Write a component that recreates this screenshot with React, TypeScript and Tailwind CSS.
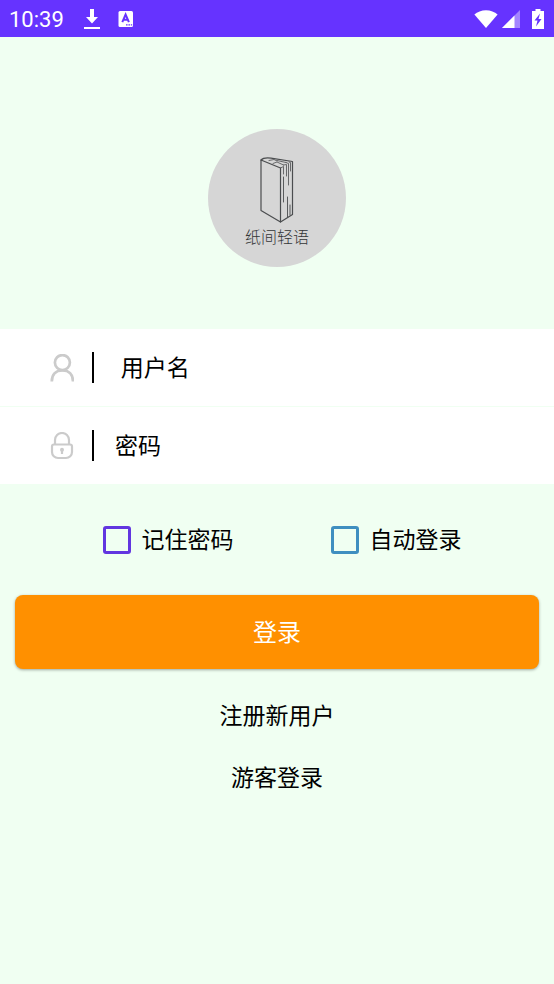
import React, { useState } from "react";

const FONT = "font-['Roboto','Noto_Sans_CJK_SC',sans-serif]";

function StatusBar() {
  return (
    <header className="flex h-[37px] items-center justify-between bg-[#6633ff] pl-[9px] pr-2.5 text-white">
      <div className="flex items-center">
        <span className="w-[75px] pt-0.5 text-[22px] leading-8">10:39</span>
        <svg className="h-5 w-4" viewBox="0 0 16 20" fill="currentColor" aria-hidden="true">
          <path d="M6 0h4v8h4l-6 6.500L2 8h4zM0 18h16v2H0z" />
        </svg>
        <svg className="ml-[18px] h-4 w-4" viewBox="0 0 16 16" aria-hidden="true">
          <rect x="0.500" width="14.500" height="16" rx="1.500" fill="#fff" />
          <path d="M4.300 11.200 7.600 3.600l3.300 7.600M5.600 8.700h4" fill="none" stroke="#6633ff" strokeWidth="2" />
          <path d="M8 13.200h1.600v1.200H8zM10.400 13.200H12v1.200h-1.600zM12.800 13.200h1.400v1.200h-1.400z" fill="#6633ff" />
        </svg>
      </div>
      <div className="flex items-center">
        <svg className="h-5 w-6" viewBox="0 0 24 20" fill="currentColor" aria-hidden="true">
          <path d="M.4 5.600C3.300 3 7.500 1.200 12 1.200S20.700 3 23.600 5.600L12 19z" />
        </svg>
        <svg className="ml-1 h-[18px] w-[18px]" viewBox="0 0 18 18" fill="currentColor" aria-hidden="true">
          <path d="M0 18 18 0v18z" opacity="0.4" />
          <path d="M0 18 12.500 5.500V18z" />
        </svg>
        <svg className="ml-3 h-5 w-3" viewBox="0 0 12 20" aria-hidden="true">
          <path d="M3.500 0h5v2H12v18H0V2h3.500z" fill="#fff" />
          <path d="M8 4.500 2.500 11.500h3L4 17.500l5.500-7.500h-3z" fill="#6633ff" />
        </svg>
      </div>
    </header>
  );
}

function Logo() {
  return (
    <div className="flex h-[138px] w-[138px] flex-col items-center rounded-full bg-[#d6d6d6] pt-7">
      <svg
        className="h-[66px] w-[34px]"
        viewBox="0 0 34 66"
        fill="none"
        stroke="#4b4d4f"
        strokeLinejoin="round"
        strokeLinecap="round"
        aria-hidden="true"
      >
        <path d="M1 3 20.500 11V65L1 53.500z" strokeWidth="1.200" />
        <path d="M1 3C3 1 7 .700 11 1.200L32.500 4.500V57.500L20.500 65" strokeWidth="1.200" />
        <path d="M20.500 11 23.500 9.500V17M23.500 8l3-.500V19M26 5.500l2.500 1V28M29 5l1.500.500V14" strokeWidth="0.800" />
        <path d="M9 3.500l5-1 3 1.500M13 6.500l4-1.500 6.500 3M17 3.500l9 2" strokeWidth="0.800" />
        <path d="M23.500 20v25M27.500 40v20M30 48v10" strokeWidth="0.900" />
      </svg>
      <p className="mt-[3px] text-[16px] leading-6 font-light text-[#333537]">纸间轻语</p>
    </div>
  );
}

function UserIcon() {
  return (
    <svg className="h-7 w-6" viewBox="0 0 24 28" fill="none" stroke="#cbcbcb" strokeWidth="2.700" aria-hidden="true">
      <circle cx="12.400" cy="8.600" r="7.500" />
      <path d="M1.800 27.500C1.800 20.500 6 16.300 12.400 16.300S23 20.500 23 27.500" />
    </svg>
  );
}

function LockIcon() {
  return (
    <svg className="h-7 w-6" viewBox="0 0 24 28" fill="none" stroke="#cbcbcb" strokeWidth="2.200" aria-hidden="true">
      <path d="M4 12.500h16q2 0 2 2V20a6 6 0 0 1-6 6H8a6 6 0 0 1-6-6v-5.500q0-2 2-2z" />
      <path d="M5 12.500V8a7 7 0 0 1 14 0v4.500" />
      <circle cx="12" cy="17.800" r="2" fill="#cbcbcb" stroke="none" />
      <path d="M12 18v4" />
    </svg>
  );
}

interface FieldProps {
  id: string;
  type: string;
  label: string;
  placeholder: string;
  icon: React.ReactNode;
}

function Field({ id, type, label, placeholder, icon }: FieldProps) {
  return (
    <div className="flex h-[77px] items-center bg-white pl-[50px] pr-4">
      <label htmlFor={id} aria-label={label}>
        {icon}
      </label>
      <div className="ml-[18px] h-[31px] w-0.5 bg-black" />
      <input
        id={id}
        type={type}
        placeholder={placeholder}
        className="ml-[21px] h-12 min-w-0 flex-1 bg-transparent pt-0.5 text-[23px] text-black outline-none placeholder:text-black"
      />
    </div>
  );
}

interface CheckProps {
  label: string;
  boxClass: string;
}

function Check({ label, boxClass }: CheckProps) {
  const [checked, setChecked] = useState(false);

  return (
    <label className="flex items-center gap-[11px] text-[23px] leading-8">
      <input
        type="checkbox"
        checked={checked}
        onChange={(e) => setChecked(e.target.checked)}
        className={`h-7 w-7 appearance-none rounded-[3px] border-3 ${boxClass}`}
      />
      <span className="pt-0.5">{label}</span>
    </label>
  );
}

export default function App() {
  return (
    <div className={`min-h-screen bg-[#f0fff2] text-black ${FONT}`}>
      <StatusBar />

      <main>
        <div className="flex justify-center pt-[92px] pb-[62px]">
          <Logo />
        </div>

        <form onSubmit={(e) => e.preventDefault()}>
          {/* Account fields */}
          <div className="grid gap-px">
            <Field id="username" type="text" label="用户名" placeholder=" 用户名" icon={<UserIcon />} />
            <Field id="password" type="password" label="密码" placeholder="密码" icon={<LockIcon />} />
          </div>

          {/* Login options */}
          <div className="flex justify-center gap-[97px] pt-[39px] pl-2.5">
            <Check label="记住密码" boxClass="border-[#6236e0] checked:bg-[#6236e0]" />
            <Check label="自动登录" boxClass="border-[#3f8fc0] checked:bg-[#3f8fc0]" />
          </div>

          <div className="px-[15px] pt-[38px]">
            <button
              type="submit"
              className="h-[74px] w-full rounded-lg bg-[#ff9000] pt-0.5 text-2xl text-white shadow-[0_1px_3px_rgba(0,0,0,0.35)]"
            >
              登录
            </button>
          </div>
        </form>

        <div className="flex flex-col items-center gap-[30px] pt-8 text-[23px] leading-8">
          <button type="button">注册新用户</button>
          <button type="button">游客登录</button>
        </div>
      </main>
    </div>
  );
}
